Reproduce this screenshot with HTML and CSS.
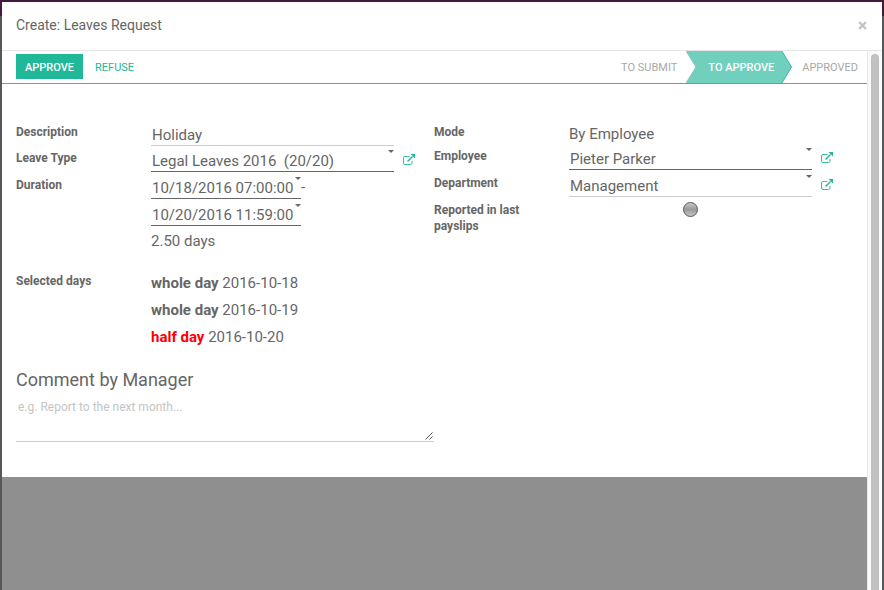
FILE: index.html
```
<!DOCTYPE html>
<html lang="en">
<head>
<meta charset="utf-8">
<title>Create: Leaves Request</title>
<link rel="stylesheet" href="styles.css">
</head>
<body>
<svg class="sprite" aria-hidden="true">
  <symbol id="external" viewBox="0 0 12 12">
    <path d="M6.500 2.500H2Q.5 2.500.5 4v5Q.5 10.500 2 10.500h5.500Q9 10.500 9 9V7" fill="none" stroke="currentColor" stroke-width=".9"/>
    <path d="M4.500 7.500 9.500 2.500" fill="none" stroke="currentColor" stroke-width="1.400"/>
    <path d="M7.500 0H12v4.500z" fill="currentColor"/>
  </symbol>
</svg>
<div class="modal" role="dialog" aria-labelledby="title">
  <header class="modal-header">
    <h1 id="title">Create: Leaves Request</h1>
    <button class="close" aria-label="Close"><svg viewBox="0 0 8 8"><path d="M1 1l6 6M7 1L1 7"/></svg></button>
  </header>
  <div class="modal-body">
    <main class="content">
      <div class="sheet">
        <div class="statusbar">
          <div class="actions">
            <button class="btn primary">Approve</button>
            <button class="btn link">Refuse</button>
          </div>
          <ol class="steps">
            <li>To Submit</li>
            <li class="current" aria-current="step">
              <svg viewBox="0 0 106 32" preserveAspectRatio="none" aria-hidden="true"><path class="fill" d="M0 0h96l10 16-10 16H0l10-16z"/><path class="edge" d="M96 0l9.500 16L96 32"/><path class="notch" d="M0 0l10 16L0 32"/></svg>
              <span>To Approve</span>
            </li>
            <li>Approved</li>
          </ol>
        </div>
        <form class="form">
          <div class="group">
            <div class="column first">
              <div class="row">
                <label for="description">Description</label>
                <div class="field"><input id="description" class="wide" value="Holiday"></div>
              </div>
              <div class="row">
                <label for="type">Leave Type</label>
                <div class="field">
                  <span class="combo wide"><input id="type" class="required" value="Legal Leaves 2016&nbsp; (20/20)"></span>
                  <button type="button" class="open" aria-label="Open leave type"><svg><use href="#external"/></svg></button>
                </div>
              </div>
              <div class="row">
                <label for="from">Duration</label>
                <div class="stack">
                  <div class="field"><span class="combo date"><input id="from" class="required" value="10/18/2016 07:00:00"></span>-</div>
                  <div class="field"><span class="combo date"><input aria-label="End date" class="required" value="10/20/2016 11:59:00"></span></div>
                  <div class="field">2.50 days</div>
                </div>
              </div>
            </div>
            <div class="column tight">
              <div class="row">
                <span class="label">Mode</span>
                <div class="field">By Employee</div>
              </div>
              <div class="row">
                <label for="employee">Employee</label>
                <div class="field">
                  <span class="combo wide"><input id="employee" class="required" value="Pieter Parker"></span>
                  <button type="button" class="open" aria-label="Open employee"><svg><use href="#external"/></svg></button>
                </div>
              </div>
              <div class="row">
                <label for="department">Department</label>
                <div class="field">
                  <span class="combo wide"><input id="department" value="Management"></span>
                  <button type="button" class="open" aria-label="Open department"><svg><use href="#external"/></svg></button>
                </div>
              </div>
              <div class="row">
                <label for="reported">Reported in last payslips</label>
                <div class="field toggle wide"><button type="button" id="reported" class="dot"></button></div>
              </div>
            </div>
          </div>
          <div class="group days">
            <div class="row">
              <span class="label">Selected days</span>
              <div class="stack">
                <div class="field"><b>whole day</b>&nbsp;2016-10-18</div>
                <div class="field"><b>whole day</b>&nbsp;2016-10-19</div>
                <div class="field"><b class="half">half day</b>&nbsp;2016-10-20</div>
              </div>
            </div>
          </div>
          <h2><label for="comment">Comment by Manager</label></h2>
          <div class="comment">
            <textarea id="comment" placeholder="e.g. Report to the next month..."></textarea>
            <svg class="grip" viewBox="0 0 8 8" aria-hidden="true"><path d="M.5 7.500l7-7M4.500 7.500l3-3"/></svg>
          </div>
        </form>
      </div>
    </main>
    <div class="scrollbar" aria-hidden="true"><div class="thumb"></div></div>
  </div>
</div>
</body>
</html>
```

FILE: styles.css
```
* { box-sizing: border-box; }

body {
  margin: 0;
  height: 100vh;
  padding: 2px 2px 0;
  overflow: hidden;
  background: linear-gradient(#451a3d 16px, #565759 16px);
  color: #666;
  font: 15px/24px Roboto, sans-serif;
}

button, input, textarea { font: inherit; color: inherit; margin: 0; padding: 0; border: 0; background: none; border-radius: 0; }
button { cursor: pointer; }
input:focus, textarea:focus { outline: none; }
.sprite { display: none; }

.modal { display: flex; flex-direction: column; height: 100%; background: #fff; }

.modal-header {
  display: flex;
  justify-content: space-between;
  align-items: center;
  height: 49px;
  padding: 0 15px 2px 14px;
  border-bottom: 1px solid #e5e5e5;
}
.modal-header h1 { margin: 0; font-size: 14px; font-weight: 400; }
.close { display: flex; padding: 0; }
.close svg { width: 9px; height: 9px; stroke: #c4c4c4; stroke-width: 2; fill: none; }

.modal-body { display: flex; flex: 1; min-height: 0; overflow: hidden; }
.content { flex: 1; background: #8f8f8f; overflow: hidden; }
.sheet { background: #fff; padding-bottom: 35px; }

.scrollbar { width: 15px; padding: 3px 3px 0; border-left: 1px solid #e8e8e8; background: #fafafa; }
.thumb { height: 100%; width: 8px; border-radius: 4px 4px 0 0; background: #c1c1c1; }

.statusbar {
  display: flex;
  justify-content: space-between;
  height: 33px;
  padding: 0 0 0 14px;
  border-bottom: 1px solid #8f8f8f;
  font-size: 11px;
  text-transform: uppercase;
}
.actions { display: flex; gap: 3px; padding-top: 3px; }
.btn { height: 25px; padding: 2px 9px 0; text-transform: uppercase; line-height: 23px; }
.primary { background: #21b799; color: #fff; font-weight: 500; }
.link { color: #21b799; }

.steps { display: flex; margin: 0; padding: 0; list-style: none; line-height: 30px; color: #a8a8a8; }
.steps li { padding: 2px 9px 0 10px; }
.steps .current { position: relative; padding: 2px 18px 0 22px; color: #fff; font-weight: 500; }
.current svg { position: absolute; inset: 0; width: 100%; height: 100%; }
.current span { position: relative; }
.fill { fill: #70cfbd; }
.edge { fill: none; stroke: #3fb8a1; }
.notch { fill: none; stroke: #8fc4b9; }

.form { padding: 38px 15px 0 14px; }
.group { display: grid; grid-template-columns: 1fr 1fr; }
.column { display: flex; flex-direction: column; gap: 3px; }
.first .row:first-child { margin-bottom: -1px; }
.tight .row:first-child { margin-bottom: -3px; }
.row { display: flex; }
.row > label, .row > .label {
  width: 135px;
  flex: none;
  padding: 2px 30px 0 0;
  font-size: 12px;
  line-height: 16px;
  font-weight: 700;
}
.stack { display: flex; flex-direction: column; gap: 3px; }
.field { display: flex; align-items: center; height: 24px; }
.row > .field { flex: 1; }
.row > .wide { flex: none; }
.wide { width: 243px; }
.date { width: 150px; }

.field input { height: 24px; padding: 3px 1px 0; border-bottom: 1px solid #ccc; }
.combo { position: relative; display: flex; }
.combo input { width: 100%; }
.field .required { border-bottom-color: #666; }
.combo::after {
  content: "";
  position: absolute;
  top: 2px;
  right: 0;
  border: 3px solid transparent;
  border-top-color: #666;
  border-bottom: 0;
}

.open { display: flex; margin-left: 9px; color: #21b799; }
.open svg { width: 12px; height: 12px; }

.row > .toggle { flex: none; justify-content: center; align-items: flex-start; padding-top: 2px; }
.dot {
  width: 15px;
  height: 15px;
  border: 1px solid #555;
  border-radius: 50%;
  background: linear-gradient(#c8c8c8, #999 50%, #c4c4c4);
}

.days { margin-top: 18px; }
.half { color: #f00; }

h2 { margin: 19px 0 0; font-size: 18px; font-weight: 400; line-height: 24px; }
.comment { position: relative; display: flex; width: 50%; margin-top: 5px; }
textarea { width: 100%; height: 45px; padding: 2px; border-bottom: 1px solid #ccc; font-size: 12px; line-height: 16px; resize: none; }
textarea::placeholder { color: #c4c4c4; }
.grip { position: absolute; right: 1px; bottom: 2px; width: 8px; height: 8px; fill: none; stroke: #555; }
```
